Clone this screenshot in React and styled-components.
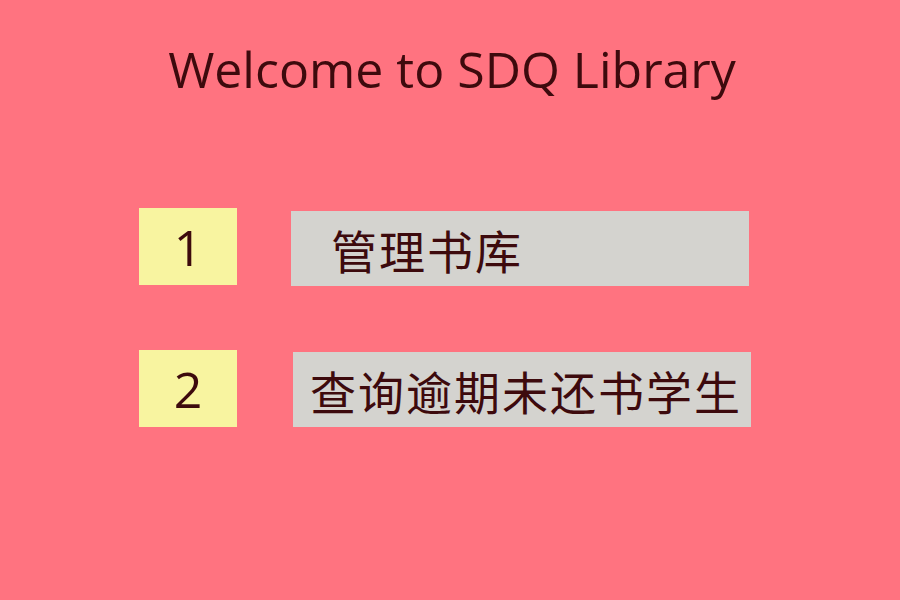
import styled, { createGlobalStyle } from "styled-components";

const GlobalStyle = createGlobalStyle`
  html, body {
    margin: 0;
    padding: 0;
    background: #ff7380;
  }
  body {
    font-family: "Open Sans", "Noto Sans CJK SC", sans-serif;
  }
`;

const Page = styled.main`
  width: 900px;
  height: 600px;
  background: #ff7380;
  display: flex;
  flex-direction: column;
  align-items: center;
  color: #3d0a0d;
`;

const Title = styled.h1`
  margin: 34px 0 0 4px;
  font-family: "Open Sans", sans-serif;
  font-size: 50px;
  font-weight: 400;
  line-height: 70px;
  color: #3d0a0d;
`;

const Menu = styled.div`
  align-self: flex-start;
  margin: 104px 0 0 139px;
  display: flex;
  flex-direction: column;
  gap: 64px;
`;

const Row = styled.div`
  display: flex;
  align-items: flex-start;
`;

const Number = styled.div`
  width: 98px;
  height: 77px;
  background: #f8f4a0;
  display: flex;
  align-items: center;
  justify-content: center;
  font-family: "Open Sans", sans-serif;
  font-size: 50px;
  font-weight: 500;
  line-height: 1;
`;

const Action = styled.button`
  margin-top: ${(p) => p.$top}px;
  margin-left: ${(p) => p.$left}px;
  width: 458px;
  height: 75px;
  border: none;
  background: #d4d3cf;
  color: #3d0a0d;
  text-align: left;
  padding: 0 0 0 ${(p) => p.$pad}px;
  font-family: "Noto Sans CJK SC", sans-serif;
  font-size: 46px;
  font-weight: 400;
  letter-spacing: 2px;
  line-height: 1;
  cursor: pointer;
`;

export default function App() {
  return (
    <Page>
      <GlobalStyle />
      <Title>Welcome to SDQ Library</Title>
      <Menu>
        <Row>
          <Number>1</Number>
          <Action $top={3} $left={54} $pad={40}>管理书库</Action>
        </Row>
        <Row>
          <Number>2</Number>
          <Action $top={2} $left={56} $pad={17}>查询逾期未还书学生</Action>
        </Row>
      </Menu>
    </Page>
  );
}
